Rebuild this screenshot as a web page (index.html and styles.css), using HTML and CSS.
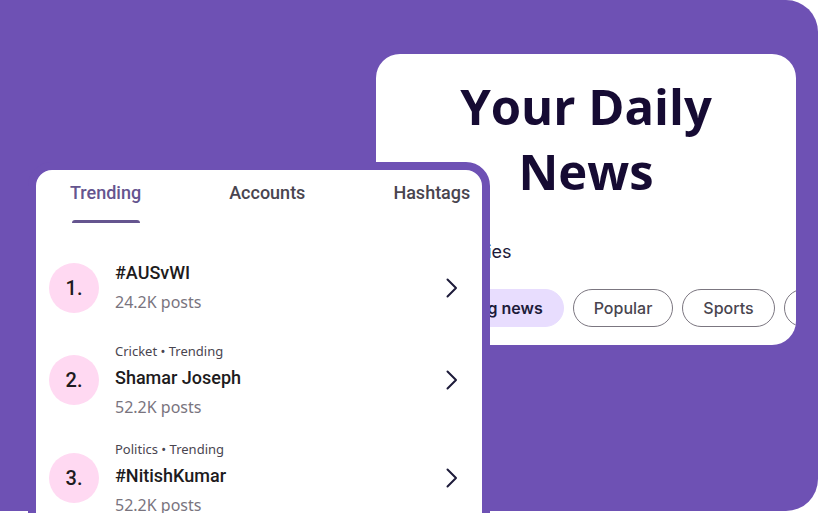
FILE: index.html
```html
<!DOCTYPE html>
<html lang="en">
<head>
<meta charset="utf-8">
<title>Your Daily News</title>
<link rel="stylesheet" href="styles.css">
</head>
<body>
<div class="stage">
  <section class="news-card">
    <h1 class="news-title">Your Daily<br>News</h1>
    <p class="news-sub">Top stories</p>
    <div class="chips">
      <span class="chip chip--active">Breaking news</span>
      <span class="chip">Popular</span>
      <span class="chip">Sports</span>
      <span class="chip">Politics</span>
    </div>
  </section>

  <section class="trend-card">
    <nav class="tabs">
      <div class="tab tab--active"><span class="tab-label">Trending</span><span class="tab-indicator"></span></div>
      <div class="tab"><span class="tab-label">Accounts</span></div>
      <div class="tab"><span class="tab-label">Hashtags</span></div>
    </nav>
    <ul class="trend-list">
      <li class="trend">
        <span class="rank">1.</span>
        <div class="trend-text">
          <div class="trend-name">#AUSvWI</div>
          <div class="trend-posts">24.2K posts</div>
        </div>
        <svg class="chev" viewBox="0 0 12 20" width="12" height="20"><polyline points="1.5,1.5 10,10 1.5,18.5" fill="none" stroke="#1d1b3a" stroke-width="2" stroke-linecap="round" stroke-linejoin="round"/></svg>
      </li>
      <li class="trend">
        <span class="rank">2.</span>
        <div class="trend-text">
          <div class="trend-cat">Cricket • Trending</div>
          <div class="trend-name">Shamar Joseph</div>
          <div class="trend-posts">52.2K posts</div>
        </div>
        <svg class="chev" viewBox="0 0 12 20" width="12" height="20"><polyline points="1.5,1.5 10,10 1.5,18.5" fill="none" stroke="#1d1b3a" stroke-width="2" stroke-linecap="round" stroke-linejoin="round"/></svg>
      </li>
      <li class="trend">
        <span class="rank">3.</span>
        <div class="trend-text">
          <div class="trend-cat">Politics • Trending</div>
          <div class="trend-name">#NitishKumar</div>
          <div class="trend-posts">52.2K posts</div>
        </div>
        <svg class="chev" viewBox="0 0 12 20" width="12" height="20"><polyline points="1.5,1.5 10,10 1.5,18.5" fill="none" stroke="#1d1b3a" stroke-width="2" stroke-linecap="round" stroke-linejoin="round"/></svg>
      </li>
    </ul>
  </section>
</div>
</body>
</html>
```

FILE: styles.css
```css
* { box-sizing: border-box; }

html, body {
  margin: 0;
  padding: 0;
  width: 820px;
  height: 513px;
  overflow: hidden;
  background: #ffffff;
  font-family: "Roboto", "Noto Sans", sans-serif;
}

.stage {
  width: 818px;
  height: 511px;
  background: #6e51b4;
  border-radius: 0 32px 32px 0;
  display: grid;
  grid-template-columns: 1fr;
  grid-template-rows: 1fr;
}

/* Back card */
.news-card {
  grid-area: 1 / 1;
  align-self: start;
  justify-self: start;
  margin: 54px 0 0 376px;
  width: 420px;
  height: 291px;
  background: #ffffff;
  border-radius: 24px;
  overflow: hidden;
  padding-top: 20px;
}

.news-title {
  margin: 0;
  font-family: "Open Sans", sans-serif;
  font-weight: 700;
  font-size: 49px;
  line-height: 65px;
  color: #160b33;
  text-align: center;
}

.news-sub {
  margin: 36px 0 0 41px;
  font-family: "Inter", sans-serif;
  font-size: 18px;
  line-height: 24px;
  color: #1d1b3a;
}

.chips {
  margin-top: 25px;
  padding-left: 32px;
  display: flex;
  gap: 9px;
  white-space: nowrap;
}

.chip {
  flex-shrink: 0;
  height: 38px;
  padding: 0 20px;
  border: 1px solid #7b7680;
  border-radius: 19px;
  display: flex;
  align-items: center;
  font-family: "Inter", sans-serif;
  font-weight: 500;
  font-size: 16px;
  color: #49454f;
}

.chip--active {
  background: #e8ddfe;
  border-color: #e8ddfe;
  font-weight: 600;
  color: #1d1b3a;
}

/* Front card */
.trend-card {
  grid-area: 1 / 1;
  align-self: start;
  justify-self: start;
  margin: 162px 0 0 28px;
  width: 462px;
  height: 400px;
  background: #ffffff;
  border: 8px solid #6e51b4;
  border-radius: 24px;
}

.tabs {
  display: flex;
  gap: 88px;
  padding-left: 34px;
  white-space: nowrap;
}

.tab {
  display: flex;
  flex-direction: column;
  padding-top: 12px;
}

.tab-label {
  font-family: "Roboto", sans-serif;
  font-weight: 500;
  font-size: 18px;
  line-height: 22px;
  color: #49454f;
}

.tab--active .tab-label { color: #65558f; }

.tab-indicator {
  height: 3px;
  margin: 16px 1px 0 2px;
  background: #65558f;
  border-radius: 3px 3px 0 0;
}

.trend-list {
  list-style: none;
  margin: 31px 0 0;
  padding: 0 24px 0 13px;
  display: flex;
  flex-direction: column;
  gap: 14px;
}

.trend {
  display: flex;
  align-items: center;
  gap: 16px;
  min-height: 68px;
}

.trend:first-child {
  min-height: 70px;
  padding-bottom: 3px;
}

.rank {
  flex-shrink: 0;
  width: 50px;
  height: 50px;
  border-radius: 50%;
  background: #ffd9f2;
  display: flex;
  align-items: center;
  justify-content: center;
  font-family: "Roboto", sans-serif;
  font-weight: 500;
  font-size: 20px;
  color: #1d1b20;
}

.trend-text {
  flex: 1;
  display: flex;
  flex-direction: column;
}

.trend-cat {
  font-family: "Noto Sans", sans-serif;
  font-size: 13px;
  line-height: 26px;
  color: #49454f;
}

.trend-name {
  font-family: "Roboto", sans-serif;
  font-weight: 500;
  font-size: 18px;
  line-height: 28px;
  color: #1d1b20;
}

.trend-posts {
  font-family: "Noto Sans", sans-serif;
  font-size: 16px;
  line-height: 30px;
  color: #79747e;
}

.chev {
  flex-shrink: 0;
  display: block;
}
```
